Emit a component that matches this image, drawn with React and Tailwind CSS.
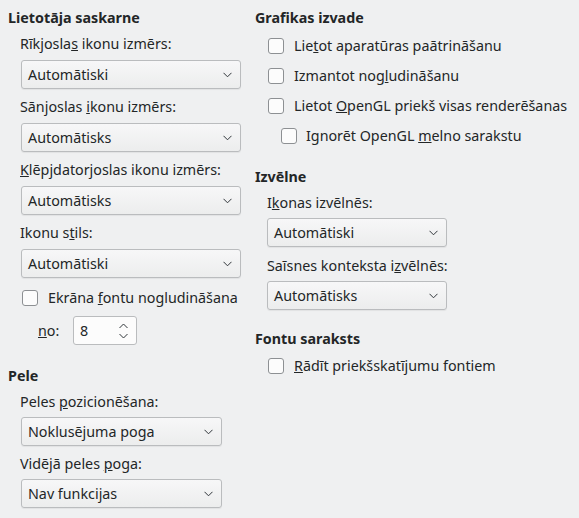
import React from 'react';

const Chevron = () => (
  <svg width="9" height="6" viewBox="0 0 9 6" className="shrink-0">
    <polyline points="0.5,0.8 4.5,4.8 8.5,0.8" fill="none" stroke="#31363b" strokeWidth="1" />
  </svg>
);

const Combo = ({ value, width }) => (
  <div
    className={`flex h-[29px] items-center justify-between rounded-[3px] border border-[#babcbe] bg-gradient-to-b from-[#f7f7f8] to-[#eceded] pl-[6px] pr-[8px] shadow-[0_1px_1px_rgba(0,0,0,0.06)] ${width}`}
  >
    <span>{value}</span>
    <Chevron />
  </div>
);

const Checkbox = ({ children }) => (
  <div className="flex h-5 items-center">
    <div className="h-4 w-4 shrink-0 rounded-[3px] border border-[#8d9093] bg-[#fcfcfc]" />
    <span className="ml-[10px]">{children}</span>
  </div>
);

const Heading = ({ children }) => <div className="h-5 font-bold">{children}</div>;

const Label = ({ children }) => <div className="h-5">{children}</div>;

export default function App() {
  return (
    <div
      className="flex h-[518px] w-[579px] bg-[#eff0f1] pt-2 text-[14.3px] leading-5 text-[#232627]"
      style={{ fontFamily: '"Noto Sans", "DejaVu Sans", sans-serif' }}
    >
      {/* left column */}
      <div className="w-[255px] shrink-0 pl-2">
        <Heading>Lietotāja saskarne</Heading>
        <div className="pl-3">
          <div className="mt-[6px]">
            <Label>Rīkjosla<u>s</u> ikonu izmērs:</Label>
            <div className="mt-[6px] pl-px">
              <Combo value="Automātiski" width="w-[220px]" />
            </div>
          </div>
          <div className="mt-2">
            <Label>Sānjoslas <u>i</u>konu izmērs:</Label>
            <div className="mt-[6px] pl-px">
              <Combo value="Automātisks" width="w-[220px]" />
            </div>
          </div>
          <div className="mt-2">
            <Label><u>K</u>lēpjdatorjoslas ikonu izmērs:</Label>
            <div className="mt-[6px] pl-px">
              <Combo value="Automātisks" width="w-[220px]" />
            </div>
          </div>
          <div className="mt-2">
            <Label>Ikonu s<u>t</u>ils:</Label>
            <div className="mt-[6px] pl-px">
              <Combo value="Automātiski" width="w-[220px]" />
            </div>
          </div>
          <div className="mt-[10px] pl-[2px]">
            <Checkbox>Ekrāna <u>f</u>ontu nogludināšana</Checkbox>
          </div>
          <div className="mt-2 flex items-center pl-[18px]">
            <span className="w-[35px]"><u>n</u>o:</span>
            <div className="flex h-[29px] w-[64px] items-center justify-between rounded-[3px] border border-[#babcbe] bg-[#fcfcfc] pl-[6px] pr-[8px]">
              <span>8</span>
              <svg width="9" height="18" viewBox="0 0 9 18">
                <polyline points="0.5,6 4.5,2 8.5,6" fill="none" stroke="#31363b" strokeWidth="1" />
                <polyline points="0.5,12 4.5,16 8.5,12" fill="none" stroke="#31363b" strokeWidth="1" />
              </svg>
            </div>
          </div>
        </div>

        <div className="mt-[21px]">
          <Heading>Pele</Heading>
          <div className="pl-3">
            <div className="mt-[6px]">
              <Label>Peles <u>p</u>ozicionēšana:</Label>
              <div className="mt-[5px] pl-px">
                <Combo value="Noklusējuma poga" width="w-[201px]" />
              </div>
            </div>
            <div className="mt-2">
              <Label>Vidējā peles <u>p</u>oga:</Label>
              <div className="mt-[5px] pl-px">
                <Combo value="Nav funkcijas" width="w-[201px]" />
              </div>
            </div>
          </div>
        </div>
      </div>

      {/* right column */}
      <div className="flex-1">
        <Heading>Grafikas izvade</Heading>
        <div className="mt-2 flex flex-col gap-[10px] pl-[13px]">
          <Checkbox>Lie<u>t</u>ot aparatūras paātrināšanu</Checkbox>
          <Checkbox>Izmantot nog<u>l</u>udināšanu</Checkbox>
          <Checkbox>Lietot <u>O</u>penGL priekš visas renderēšanas</Checkbox>
          <div className="pl-[13px]">
            <div className="flex h-5 items-center">
              <div className="h-4 w-4 shrink-0 rounded-[3px] border border-[#8d9093] bg-[#fcfcfc]" />
              <span className="ml-[9px]">Ignorēt OpenGL <u>m</u>elno sarakstu</span>
            </div>
          </div>
        </div>

        <div className="mt-[21px]">
          <Heading>Izvēlne</Heading>
          <div className="pl-3">
            <div className="mt-[6px]">
              <Label>I<u>k</u>onas izvēlnēs:</Label>
              <div className="mt-[5px]">
                <Combo value="Automātiski" width="w-[180px]" />
              </div>
            </div>
            <div className="mt-[9px]">
              <Label>Saīsnes konteksta i<u>z</u>vēlnēs:</Label>
              <div className="mt-[5px]">
                <Combo value="Automātisks" width="w-[180px]" />
              </div>
            </div>
          </div>
        </div>

        <div className="mt-[19px]">
          <Heading>Fontu saraksts</Heading>
          <div className="mt-[7px] pl-[13px]">
            <Checkbox><u>R</u>ādīt priekšskatījumu fontiem</Checkbox>
          </div>
        </div>
      </div>
    </div>
  );
}
